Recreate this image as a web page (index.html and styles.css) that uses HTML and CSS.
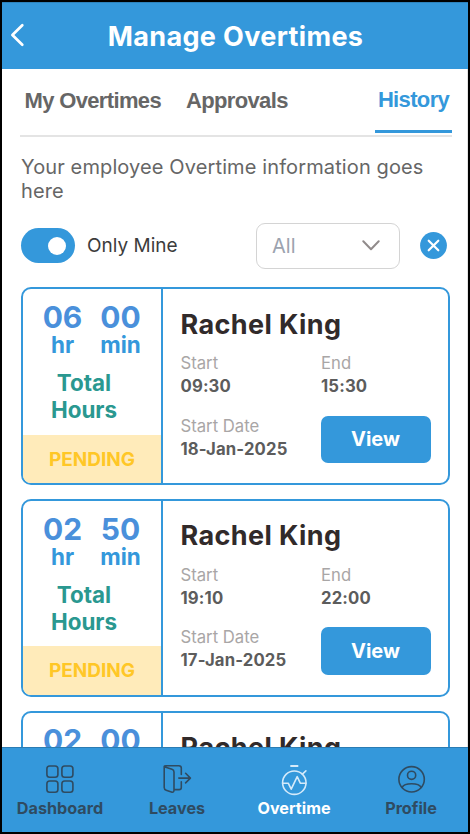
FILE: index.html
```html
<!DOCTYPE html>
<html lang="en">
<head>
<meta charset="utf-8">
<title>Manage Overtimes</title>
<link rel="stylesheet" href="styles.css">
</head>
<body>
<div class="screen">
  <header class="header">
    <svg class="back" viewBox="0 0 16 24"><path d="M13.3 2.2 3.4 12l9.9 9.8"/></svg>
    <h1 class="title">Manage Overtimes</h1>
  </header>
  <main class="content">
    <nav class="tabs">
      <a class="tab tab-mine">My Overtimes</a>
      <a class="tab tab-approvals">Approvals</a>
      <a class="tab tab-active">History</a>
    </nav>
    <p class="intro">Your employee Overtime information goes here</p>
    <div class="filters">
      <span class="toggle"><span class="knob"></span></span>
      <span class="toggle-label">Only Mine</span>
      <div class="select">
        <span>All</span>
        <svg class="chevron" viewBox="0 0 18 11"><path d="M1.3 1.3 9 9.2l7.7-7.9"/></svg>
      </div>
      <svg class="clear" viewBox="0 0 27 27"><circle cx="13.5" cy="13.5" r="13.4"/><path d="m8.7 8.7 9.6 9.6m0-9.6-9.6 9.6"/></svg>
    </div>
    <section class="cards">
      <article class="card">
        <div class="summary">
          <div class="time">
            <div class="unit"><span class="num">06</span><span class="name">hr</span></div>
            <div class="unit"><span class="num">00</span><span class="name">min</span></div>
          </div>
          <div class="total">Total<br>Hours</div>
          <div class="status">PENDING</div>
        </div>
        <div class="details">
          <h2 class="person">Rachel King</h2>
          <div class="grid">
            <div class="field"><span class="key">Start</span><span class="value">09:30</span></div>
            <div class="field"><span class="key">End</span><span class="value">15:30</span></div>
            <div class="field"><span class="key">Start Date</span><span class="value">18-Jan-2025</span></div>
            <button class="view">View</button>
          </div>
        </div>
      </article>
      <article class="card">
        <div class="summary">
          <div class="time">
            <div class="unit"><span class="num">02</span><span class="name">hr</span></div>
            <div class="unit"><span class="num">50</span><span class="name">min</span></div>
          </div>
          <div class="total">Total<br>Hours</div>
          <div class="status">PENDING</div>
        </div>
        <div class="details">
          <h2 class="person">Rachel King</h2>
          <div class="grid">
            <div class="field"><span class="key">Start</span><span class="value">19:10</span></div>
            <div class="field"><span class="key">End</span><span class="value">22:00</span></div>
            <div class="field"><span class="key">Start Date</span><span class="value">17-Jan-2025</span></div>
            <button class="view">View</button>
          </div>
        </div>
      </article>
      <article class="card">
        <div class="summary">
          <div class="time">
            <div class="unit"><span class="num">02</span></div>
            <div class="unit"><span class="num">00</span></div>
          </div>
        </div>
        <div class="details">
          <h2 class="person">Rachel King</h2>
        </div>
      </article>
    </section>
  </main>
  <nav class="bottom">
    <a class="item">
      <svg class="icon" viewBox="0 0 30 32"><rect x="1.9" y="2" width="11" height="11.3" rx="2.8"/><rect x="16.9" y="2" width="11" height="11.3" rx="2.8"/><rect x="1.9" y="17" width="11" height="11.3" rx="2.8"/><rect x="16.9" y="17" width="11" height="11.3" rx="2.8"/></svg>
      <span>Dashboard</span>
    </a>
    <a class="item">
      <svg class="icon" viewBox="0 0 30 32"><path d="M2.2 2.8 10 5.3q2 .6 2 2.8v17.8q0 3-2.6 2.1l-5.2-1.8q-2-.7-2-2.8zM2.2 2.3Q2.4 1.7 4 1.7h12.9q2.4 0 2.4 2.4v6.4M19.3 17.9v5.5q0 2.2-2.2 2.2H12M16.8 14.1h11.5M23.6 9.3l4.8 4.8-4.8 4.8"/></svg>
      <span>Leaves</span>
    </a>
    <a class="item item-active">
      <svg class="icon" viewBox="0 0 30 32"><path class="cap" d="M11.3 2h8"/><circle cx="15.3" cy="18.7" r="11.7"/><path d="m23.4 10.1 3.5-3.2M3.6 19.2h5.6l3 6 6-12.5 3.1 6.5h5.7"/></svg>
      <span>Overtime</span>
    </a>
    <a class="item">
      <svg class="icon" viewBox="0 0 30 32"><circle cx="15.6" cy="15.3" r="12.7"/><circle cx="15.6" cy="11.3" r="4.1"/><path d="M6.2 23.4c1.2-2.7 4.8-3.7 9.4-3.7s8.2 1 9.4 3.7"/></svg>
      <span>Profile</span>
    </a>
  </nav>
</div>
</body>
</html>
```
FILE: styles.css
```css
* { box-sizing: border-box; }

body {
  margin: 0;
  font-family: Inter, sans-serif;
}

svg {
  display: block;
  fill: none;
  stroke-linecap: round;
  stroke-linejoin: round;
}

.screen {
  width: 470px;
  height: 834px;
  border: 2px solid #000;
  background: #fff;
  display: flex;
  flex-direction: column;
  overflow: hidden;
}

.header {
  height: 67px;
  flex: none;
  display: flex;
  align-items: center;
  background: #3498db;
  border-top: 1px solid #2d83bd;
  padding: 0 8px;
}

.back {
  width: 16px;
  height: 24px;
  margin: -2px 1px 0 -1px;
  stroke: #fff;
  stroke-width: 2.7;
}

.title {
  flex: 1;
  margin: 1px 15px 0 0;
  text-align: center;
  font-size: 27px;
  line-height: 34px;
  letter-spacing: 0.35px;
  font-weight: 700;
  color: #fff;
}

.content {
  flex: 1;
  min-height: 0;
  overflow: hidden;
  padding: 0 17px 0 19px;
  border: solid #e4e4e4;
  border-width: 0 1px 0 0;
}

.tabs {
  display: flex;
  height: 68px;
  margin-left: -1px;
  margin-right: -2px;
  border-bottom: 2px solid #e4e4e4;
  font: 700 22px/30px "Liberation Sans", sans-serif;
  letter-spacing: -0.65px;
  color: #666;
}

.tab { padding-top: 17px; height: 64px; white-space: nowrap; }
.tab-mine { padding-left: 4.5px; }
.tab-approvals { margin-left: 25px; }

.tab-active {
  margin-left: auto;
  width: 77px;
  padding-top: 16px;
  text-align: center;
  color: #3498db;
  border-bottom: 3px solid #3498db;
}

.intro {
  margin: 18px 0 0;
  font-size: 20px;
  line-height: 24px;
  letter-spacing: 0.12px;
  color: #666;
}

.filters {
  display: flex;
  align-items: center;
  height: 46px;
  margin-top: 20px;
}

.toggle {
  width: 54px;
  height: 35px;
  margin-top: -1px;
  border-radius: 18px;
  background: #3498db;
  padding: 8.5px 9px 0 27px;
}

.knob {
  display: block;
  width: 18px;
  height: 18px;
  border-radius: 50%;
  background: #fff;
}

.toggle-label {
  margin: -1px 0 0 12px;
  font-size: 19px;
  color: #3c3c3c;
}

.select {
  margin-left: auto;
  width: 144px;
  height: 46px;
  border: 1px solid #d4d4d4;
  border-radius: 9px;
  padding: 0 19px 0 15px;
  display: flex;
  align-items: center;
  justify-content: space-between;
  font-size: 20px;
  color: #9ca3af;
}

.chevron {
  width: 18px;
  height: 11px;
  margin-top: -2px;
  stroke: #918b8b;
  stroke-width: 2;
}

.clear { width: 27px; height: 27px; margin: -2px 3px 0 20px; }
.clear circle { fill: #3498db; }
.clear path { stroke: #fff; stroke-width: 2.2; }

.cards {
  margin-top: 18.4px;
  display: grid;
  gap: 14px;
}

.card {
  height: 197.6px;
  display: flex;
  border: 2px solid #3498db;
  border-radius: 10px;
  overflow: hidden;
}

.summary {
  flex: none;
  width: 140px;
  border-right: 2px solid #3498db;
  display: flex;
  flex-direction: column;
}

.time { display: flex; justify-content: center; gap: 18px; padding: 11.6px 1px 0 0; }

.unit {
  width: 40px;
  display: flex;
  flex-direction: column;
  align-items: center;
  font-weight: 700;
}

.num { font-size: 30px; line-height: 32px; color: #4a90db; }
.name { font-size: 22.4px; line-height: 24px; color: #3498db; }

.total {
  margin: 12px 16px 0 0;
  text-align: center;
  font-size: 22.4px;
  line-height: 27px;
  font-weight: 700;
  color: #2a9890;
}

.status {
  margin-top: auto;
  height: 48.2px;
  background: #ffebba;
  color: #ffc727;
  font-size: 19px;
  line-height: 49px;
  font-weight: 700;
  text-align: center;
}

.details { flex: 1; padding: 19.2px 17px 0 17.5px; }

.person {
  margin: 0;
  font-size: 27px;
  line-height: 32px;
  letter-spacing: 0.4px;
  font-weight: 700;
  color: #312a2a;
}

.grid {
  display: grid;
  grid-template-columns: 140.5px 110px;
  grid-template-rows: 62.5px 48px;
}

.field { display: flex; flex-direction: column; padding-top: 11.6px; }
.key { font-size: 16.7px; line-height: 22px; color: #a9a6a6; }
.value { font-size: 16.7px; line-height: 24.4px; letter-spacing: 0.15px; font-weight: 700; color: #5c5c5c; }

.view {
  align-self: start;
  margin-top: 12.7px;
  height: 47.2px;
  border: 0;
  border-radius: 7px;
  background: #3498db;
  color: #fff;
  font: 700 20px/46px Inter, sans-serif;
  padding: 0 1px 0 0;
}

.bottom {
  flex: none;
  height: 85px;
  margin: 0 -1px;
  display: grid;
  grid-template-columns: repeat(4, 1fr);
  background: #3498db;
  border-top: 1px solid #2b7cb3;
}

.item {
  display: flex;
  flex-direction: column;
  align-items: center;
  padding: 16px 0 0 1px;
  font-size: 16.2px;
  line-height: 24px;
  font-weight: 700;
  color: #2f4b61;
}

.item-active { color: #fff; }

.icon {
  width: 30px;
  height: 32px;
  margin-left: -1px;
  stroke: #2f4b61;
  stroke-width: 1.6;
}

.item-active .icon { stroke: #d5eafa; }
.item-active .cap { stroke-width: 2; stroke-linecap: butt; }
```
